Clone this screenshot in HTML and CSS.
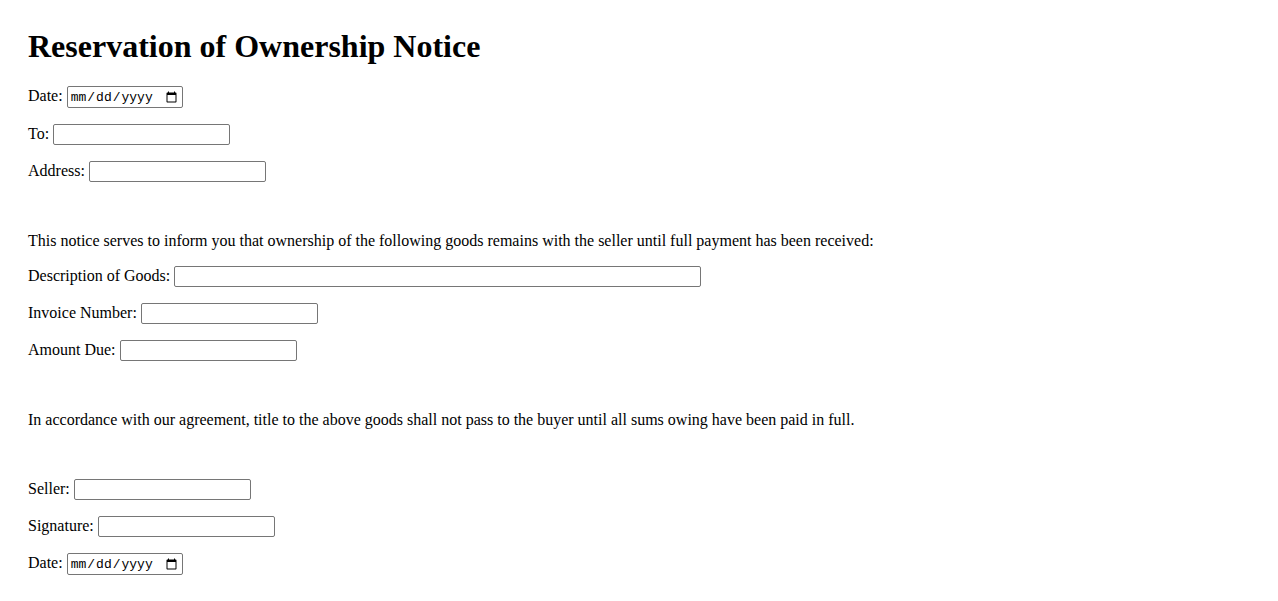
FILE: index.html
```html
<!DOCTYPE html>
<html lang="en">
<head>
<meta charset="utf-8">
<title>Reservation of Ownership Notice</title>
<link rel="stylesheet" href="styles.css">
</head>
<body>
<div class="page">
  <h1 class="title">Reservation of Ownership Notice</h1>
  <form class="notice">
    <p class="row"><label for="date1">Date:</label> <input class="field field-date" type="date" id="date1"></p>
    <p class="row"><label for="to">To:</label> <input class="field" type="text" id="to"></p>
    <p class="row"><label for="address">Address:</label> <input class="field" type="text" id="address"></p>
    <br>
    <p class="text">This notice serves to inform you that ownership of the following goods remains with the seller until full payment has been received:</p>
    <p class="row"><label for="goods">Description of Goods:</label> <input class="field field-wide" type="text" id="goods"></p>
    <p class="row"><label for="invoice">Invoice Number:</label> <input class="field" type="text" id="invoice"></p>
    <p class="row"><label for="amount">Amount Due:</label> <input class="field" type="text" id="amount"></p>
    <br>
    <p class="text">In accordance with our agreement, title to the above goods shall not pass to the buyer until all sums owing have been paid in full.</p>
    <br>
    <p class="row"><label for="seller">Seller:</label> <input class="field" type="text" id="seller"></p>
    <p class="row"><label for="signature">Signature:</label> <input class="field" type="text" id="signature"></p>
    <p class="row"><label for="date2">Date:</label> <input class="field field-date" type="date" id="date2"></p>
  </form>
</div>
</body>
</html>
```

FILE: styles.css
```css
body {
  margin: 8px;
  font-family: "Liberation Serif", "Times New Roman", serif;
  font-size: 16px;
  color: #000;
  background: #fff;
}

.page {
  padding: 20px;
}

.title {
  margin: 0 0 21px;
  font-size: 32px;
  font-weight: bold;
}

.row,
.text {
  margin: 16px 0;
}

.notice > .row:first-child {
  margin-top: 0;
}

.field {
  width: 177px;
  height: 21px;
  box-sizing: border-box;
  border: 1px solid #767676;
  border-radius: 2px;
  padding: 1px 2px;
  font-family: "Liberation Sans", Arial, sans-serif;
  font-size: 13.33px;
  vertical-align: baseline;
}

.field-wide {
  width: 527px;
}

.field-date {
  width: 116px;
  height: 22px;
  font-family: "Liberation Mono", "DejaVu Sans Mono", monospace;
  font-size: 13px;
}
```
